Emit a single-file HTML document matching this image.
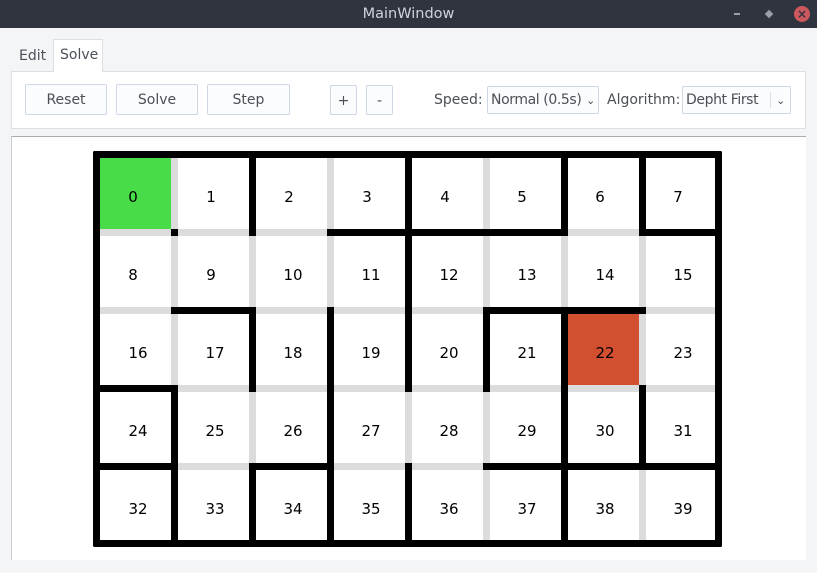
<!DOCTYPE html>
<html><head><meta charset="utf-8"><style>
*{margin:0;padding:0;box-sizing:border-box}
body{width:817px;height:573px;background:#f4f5f7;position:relative;overflow:hidden;font-family:"DejaVu Sans","Liberation Sans",sans-serif;font-size:14px;color:#4b4f57}
.a{position:absolute}
.btn{position:absolute;border:1px solid #cfd6e6;border-radius:2px;background:#fbfcfd;text-align:center;line-height:31px;color:#4b4f57;font-size:14px}
.cb{position:absolute;border:1px solid #cfd6e6;border-radius:2px;background:#fbfcfd;height:28px;line-height:27px;padding-left:3px;font-size:14px;letter-spacing:-0.4px;color:#4b4f57;white-space:nowrap;overflow:hidden}
</style></head><body>
<div class="a" style="left:0;top:0;width:817px;height:28px;background:#2f343f"></div>
<div class="a" style="left:0;top:0;width:817px;height:28px;line-height:28px;text-align:center;color:#cfd3da;font-size:14.5px">MainWindow</div>
<div class="a" style="left:734px;top:13px;width:6px;height:2px;background:#9aa0aa"></div>
<div class="a" style="left:766px;top:11px;width:6px;height:6px;background:#9aa0aa;transform:rotate(45deg)"></div>
<div class="a" style="left:794px;top:6px;width:16px;height:16px;border-radius:50%;background:#cc575d;color:#2f343f;font-size:12px;line-height:16px;text-align:center;font-weight:bold">×</div>

<div class="a" style="left:19px;top:48px;font-size:14px">Edit</div>
<div class="a" style="left:53px;top:39px;width:50px;height:34px;background:#fff;border:1px solid #dcdfe3;border-bottom:none"></div>
<div class="a" style="left:60px;top:47px;font-size:14px">Solve</div>
<div class="a" style="left:11px;top:71px;width:795px;height:58px;background:#fff;border:1px solid #dcdfe3"></div>
<div class="a" style="left:54px;top:71px;width:48px;height:2px;background:#fff"></div>

<div class="btn" style="left:25px;top:84px;width:82px;height:31px">Reset</div>
<div class="btn" style="left:116px;top:84px;width:82px;height:31px">Solve</div>
<div class="btn" style="left:207px;top:84px;width:83px;height:31px">Step</div>
<div class="btn" style="left:330px;top:85px;width:27px;height:30px">+</div>
<div class="btn" style="left:366px;top:85px;width:27px;height:30px">-</div>
<div class="a" style="left:434px;top:92px">Speed:</div>
<div class="cb" style="left:487px;top:86px;width:112px">Normal (0.5s)<span style="position:absolute;right:3px;top:0;font-size:11px;background:#fbfcfd">⌄</span></div>
<div class="a" style="left:607px;top:92px">Algorithm:</div>
<div class="cb" style="left:682px;top:86px;width:109px">Depht First<span style="position:absolute;left:87px;top:5px;width:1px;height:16px;background:#dcdfe3"></span><span style="position:absolute;right:5px;top:0;font-size:11px">⌄</span></div>

<div class="a" style="left:11px;top:136px;width:795px;height:424px;background:#fff;border-top:1px solid #a9adb2;border-left:1px solid #c9ccd0"></div>

<svg class="a" style="left:0;top:0" width="817" height="573" xmlns="http://www.w3.org/2000/svg">
<rect x="93" y="151" width="629" height="396" fill="#dcdcdc"/>
<g fill="#fff">
<g id="row">
<rect x="100" y="158" width="71" height="71"/><rect x="178" y="158" width="71" height="71"/><rect x="256" y="158" width="71" height="71"/><rect x="334" y="158" width="71" height="71"/><rect x="412" y="158" width="71" height="71"/><rect x="490" y="158" width="71" height="71"/><rect x="568" y="158" width="71" height="71"/><rect x="646" y="158" width="71" height="71"/>
</g>
<use href="#row" y="78"/><use href="#row" y="156"/><use href="#row" y="234"/><use href="#row" y="312"/>
</g>
<rect x="100" y="158" width="71" height="71" fill="#48dc48"/>
<rect x="568" y="314" width="71" height="71" fill="#d24f2f"/>
<g fill="#000">
<g id="ir"><rect x="171" y="229" width="7" height="7"/><rect x="249" y="229" width="7" height="7"/><rect x="327" y="229" width="7" height="7"/><rect x="405" y="229" width="7" height="7"/><rect x="483" y="229" width="7" height="7"/><rect x="561" y="229" width="7" height="7"/><rect x="639" y="229" width="7" height="7"/></g>
<use href="#ir" y="78"/><use href="#ir" y="156"/><use href="#ir" y="234"/>
<rect x="93" y="151" width="629" height="7" rx="2"/><rect x="93" y="540" width="629" height="7" rx="2"/>
<rect x="93" y="151" width="7" height="396" rx="2"/><rect x="715" y="151" width="7" height="396" rx="2"/>
<rect x="249" y="158" width="7" height="71"/><rect x="405" y="158" width="7" height="71"/><rect x="561" y="158" width="7" height="71"/><rect x="639" y="158" width="7" height="71"/>
<rect x="405" y="236" width="7" height="71"/>
<rect x="249" y="314" width="7" height="71"/><rect x="327" y="314" width="7" height="71"/><rect x="405" y="314" width="7" height="71"/><rect x="483" y="314" width="7" height="71"/><rect x="561" y="314" width="7" height="71"/>
<rect x="171" y="392" width="7" height="71"/><rect x="327" y="392" width="7" height="71"/><rect x="561" y="392" width="7" height="71"/><rect x="639" y="392" width="7" height="71"/>
<rect x="171" y="470" width="7" height="71"/><rect x="249" y="470" width="7" height="71"/><rect x="327" y="470" width="7" height="71"/><rect x="405" y="470" width="7" height="71"/><rect x="561" y="470" width="7" height="71"/>
<rect x="334" y="229" width="71" height="7"/><rect x="412" y="229" width="71" height="7"/><rect x="490" y="229" width="71" height="7"/><rect x="646" y="229" width="71" height="7"/>
<rect x="178" y="307" width="71" height="7"/><rect x="490" y="307" width="71" height="7"/><rect x="568" y="307" width="71" height="7"/>
<rect x="100" y="385" width="71" height="7"/>
<rect x="100" y="463" width="71" height="7"/><rect x="256" y="463" width="71" height="7"/><rect x="490" y="463" width="71" height="7"/><rect x="568" y="463" width="71" height="7"/><rect x="646" y="463" width="71" height="7"/>
</g>
<g font-family="DejaVu Sans, sans-serif" font-size="15" fill="#000" text-anchor="middle">
<text x="133" y="202">0</text><text x="211" y="202">1</text><text x="289" y="202">2</text><text x="367" y="202">3</text><text x="445" y="202">4</text><text x="522" y="202">5</text><text x="600" y="202">6</text><text x="678" y="202">7</text>
<text x="133" y="280">8</text><text x="211" y="280">9</text><text x="293" y="280">10</text><text x="371" y="280">11</text><text x="449" y="280">12</text><text x="527" y="280">13</text><text x="605" y="280">14</text><text x="683" y="280">15</text>
<text x="138" y="358">16</text><text x="215" y="358">17</text><text x="293" y="358">18</text><text x="371" y="358">19</text><text x="449" y="358">20</text><text x="527" y="358">21</text><text x="605" y="358">22</text><text x="683" y="358">23</text>
<text x="138" y="436">24</text><text x="215" y="436">25</text><text x="293" y="436">26</text><text x="371" y="436">27</text><text x="449" y="436">28</text><text x="527" y="436">29</text><text x="605" y="436">30</text><text x="683" y="436">31</text>
<text x="138" y="514">32</text><text x="215" y="514">33</text><text x="293" y="514">34</text><text x="371" y="514">35</text><text x="449" y="514">36</text><text x="527" y="514">37</text><text x="605" y="514">38</text><text x="683" y="514">39</text>
</g>
</svg>
</body></html>
